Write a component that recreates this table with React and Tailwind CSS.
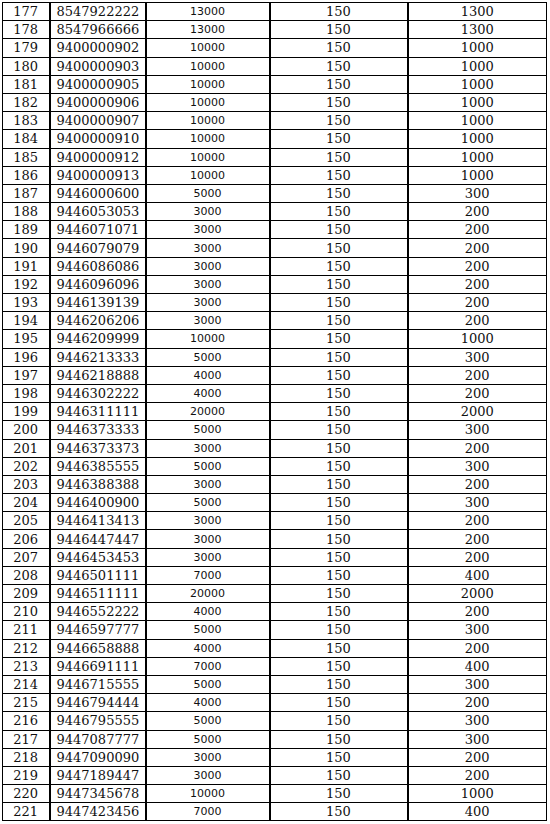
import React from 'react';

// rows: serial, number, col3, col4, col5
const rows = [
  [177, '8547922222', 13000, 150, 1300],
  [178, '8547966666', 13000, 150, 1300],
  [179, '9400000902', 10000, 150, 1000],
  [180, '9400000903', 10000, 150, 1000],
  [181, '9400000905', 10000, 150, 1000],
  [182, '9400000906', 10000, 150, 1000],
  [183, '9400000907', 10000, 150, 1000],
  [184, '9400000910', 10000, 150, 1000],
  [185, '9400000912', 10000, 150, 1000],
  [186, '9400000913', 10000, 150, 1000],
  [187, '9446000600', 5000, 150, 300],
  [188, '9446053053', 3000, 150, 200],
  [189, '9446071071', 3000, 150, 200],
  [190, '9446079079', 3000, 150, 200],
  [191, '9446086086', 3000, 150, 200],
  [192, '9446096096', 3000, 150, 200],
  [193, '9446139139', 3000, 150, 200],
  [194, '9446206206', 3000, 150, 200],
  [195, '9446209999', 10000, 150, 1000],
  [196, '9446213333', 5000, 150, 300],
  [197, '9446218888', 4000, 150, 200],
  [198, '9446302222', 4000, 150, 200],
  [199, '9446311111', 20000, 150, 2000],
  [200, '9446373333', 5000, 150, 300],
  [201, '9446373373', 3000, 150, 200],
  [202, '9446385555', 5000, 150, 300],
  [203, '9446388388', 3000, 150, 200],
  [204, '9446400900', 5000, 150, 300],
  [205, '9446413413', 3000, 150, 200],
  [206, '9446447447', 3000, 150, 200],
  [207, '9446453453', 3000, 150, 200],
  [208, '9446501111', 7000, 150, 400],
  [209, '9446511111', 20000, 150, 2000],
  [210, '9446552222', 4000, 150, 200],
  [211, '9446597777', 5000, 150, 300],
  [212, '9446658888', 4000, 150, 200],
  [213, '9446691111', 7000, 150, 400],
  [214, '9446715555', 5000, 150, 300],
  [215, '9446794444', 4000, 150, 200],
  [216, '9446795555', 5000, 150, 300],
  [217, '9447087777', 5000, 150, 300],
  [218, '9447090090', 3000, 150, 200],
  [219, '9447189447', 3000, 150, 200],
  [220, '9447345678', 10000, 150, 1000],
  [221, '9447423456', 7000, 150, 400],
];

const serif = "font-['DejaVu_Serif',serif] text-[13px]";
const sans = "font-['DejaVu_Sans',sans-serif] text-[11px]";

export default function App() {
  return (
    <div className="min-h-[824px] w-[550px] bg-white pl-[2px] pt-[2px]">
      <table className="w-[544px] table-fixed border-collapse border border-black text-[#111]">
        <colgroup>
          <col className="w-[47px]" />
          <col className="w-[96px]" />
          <col className="w-[124px]" />
          <col className="w-[138px]" />
          <col className="w-[139px]" />
        </colgroup>
        <tbody>
          {rows.map((r) => (
            <tr key={r[0]} className="h-[18.2px] leading-none">
              <td className={`border-r-2 border-b border-black p-0 text-center ${serif}`}>{r[0]}</td>
              <td className={`border-r-2 border-b border-black p-0 pl-[6px] text-left ${serif}`}>{r[1]}</td>
              <td className={`border-r-2 border-b border-black p-0 text-center ${sans}`}>{r[2]}</td>
              <td className={`border-r-2 border-b border-black p-0 text-center ${serif}`}>{r[3]}</td>
              <td className={`border-b border-black p-0 text-center ${serif}`}>{r[4]}</td>
            </tr>
          ))}
        </tbody>
      </table>
    </div>
  );
}
